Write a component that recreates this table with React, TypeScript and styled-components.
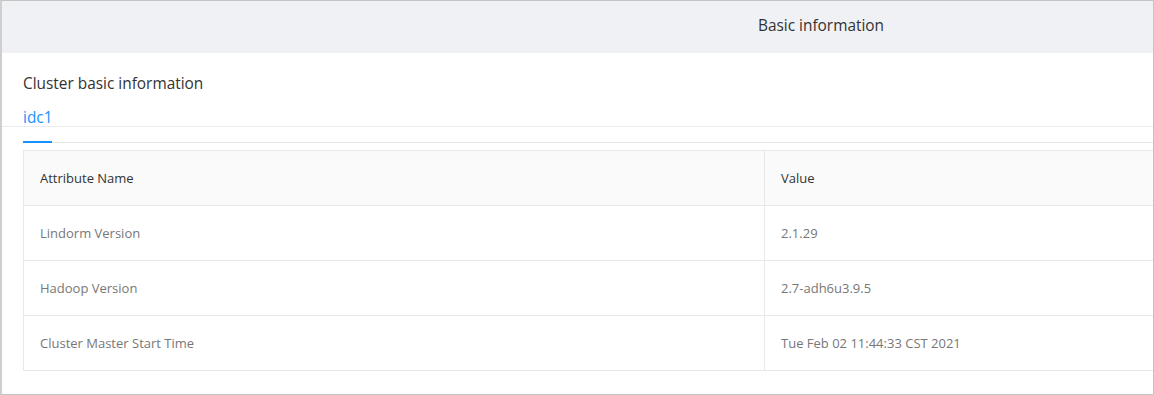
import React from 'react';
import styled, { createGlobalStyle } from 'styled-components';

const GlobalStyle = createGlobalStyle`
  html, body {
    margin: 0;
    padding: 0;
    background: #fff;
  }
  body {
    font-family: "Open Sans", "Noto Sans", "Liberation Sans", sans-serif;
  }
`;

const rows = [
    { name: 'Lindorm Version', value: '2.1.29' },
    { name: 'Hadoop Version', value: '2.7-adh6u3.9.5' },
    { name: 'Cluster Master Start Time', value: 'Tue Feb 02 11:44:33 CST 2021' },
];

export default function App() {
    return (
        <>
            <GlobalStyle />
            <Frame>
                <Header>
                    <HeaderTitle>Basic information</HeaderTitle>
                </Header>
                <Content>
                    <SectionTitle>Cluster basic information</SectionTitle>
                    <TabBar>
                        <Tab active>idc1</Tab>
                    </TabBar>
                    <Table>
                        <Row head>
                            <Cell head>Attribute Name</Cell>
                            <Cell head>Value</Cell>
                        </Row>
                        {rows.map(r => (
                            <Row key={r.name}>
                                <Cell>{r.name}</Cell>
                                <Cell>{r.value}</Cell>
                            </Row>
                        ))}
                    </Table>
                </Content>
            </Frame>
        </>
    );
}

const Frame = styled.div`
    box-sizing: border-box;
    width: 1154px;
    height: 395px;
    border: 1px solid #c4c4c4;
    border-left: 2px solid #cfcfcf;
    overflow: hidden;
    background: #fff;
`;

const Header = styled.div`
    height: 52px;
    background: #f0f1f4;
    display: flex;
    align-items: center;
    padding-left: 756px;
`;

const HeaderTitle = styled.div`
    font-size: 15.4px;
    color: #333;
    margin-top: -4px;
`;

const Content = styled.div`
    position: relative;
    padding: 19px 0 0 21px;

    &::before {
        content: '';
        position: absolute;
        left: -2px;
        right: 0;
        top: 73px;
        height: 1px;
        background: #ececec;
    }
`;

const SectionTitle = styled.div`
    font-size: 15.4px;
    color: #333;
    line-height: 24px;
`;

const TabBar = styled.div`
    position: relative;
    display: flex;
    border-bottom: 1px solid #e8e8e8;
    margin-top: 2px;
`;

const Tab = styled.div<{ active?: boolean }>`
    position: relative;
    z-index: 1;
    font-size: 15.4px;
    line-height: 22px;
    padding: 9px 0 12px;
    margin-bottom: -1px;
    color: ${p => (p.active ? '#1890ff' : '#333')};
    border-bottom: 2px solid ${p => (p.active ? '#1890ff' : 'transparent')};
`;

const Table = styled.div`
    margin-top: 7px;
    width: 1500px;
    border: 1px solid #e8e8e8;
`;

const Row = styled.div<{ head?: boolean }>`
    display: grid;
    grid-template-columns: 741px 1fr;
    height: ${p => (p.head ? '54px' : '55px')};
    box-sizing: border-box;
    background: ${p => (p.head ? '#fafafa' : '#fff')};
    border-top: ${p => (p.head ? 'none' : '1px solid #e8e8e8')};
    & > div:first-child {
        border-right: 1px solid #e8e8e8;
    }
`;

const Cell = styled.div<{ head?: boolean }>`
    display: flex;
    align-items: center;
    padding-left: 16px;
    font-size: 13px;
    color: ${p => (p.head ? '#333' : '#777')};
    font-weight: ${p => (p.head ? 500 : 400)};
`;
